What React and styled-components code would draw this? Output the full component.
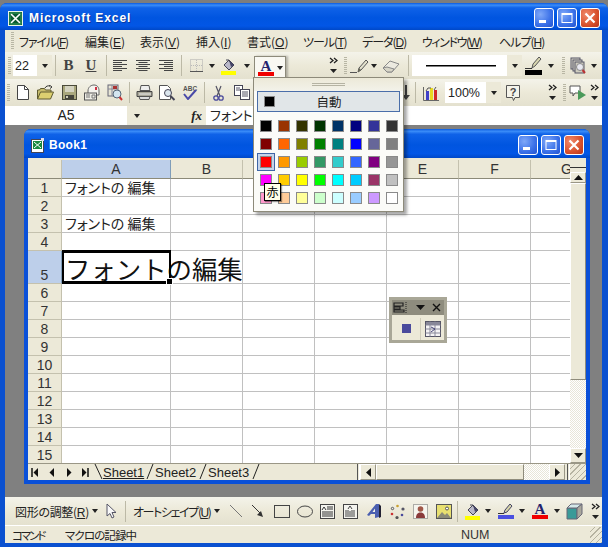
import React from 'react';
import styled, { createGlobalStyle } from 'styled-components';

const Global = createGlobalStyle`
  html, body { margin: 0; padding: 0; background: #7d7d7d; }
  #root { width: 608px; height: 547px; overflow: hidden; }
`;
const JP = `"Noto Sans CJK JP", "Liberation Sans", sans-serif`;
const Page = styled.div`position: relative; width: 608px; height: 547px; overflow: hidden; background: #7d7d7d; padding-top: 3px; box-sizing: border-box; font-family: ${JP}; font-feature-settings: "palt"; color: #222;`;
const Frame = styled.div`display: flex; flex-direction: column; height: 544px; background: #0a50d0; border-radius: 7px 7px 0 0; overflow: hidden;`;
const titleGrad = `linear-gradient(180deg,#0a5ae0 0%,#3a8cf8 8%,#0f62e8 18%,#0055e0 55%,#0256e6 85%,#0048c8 100%)`;
const TitleBar = styled.div`height: 27px; flex: none; display: flex; align-items: center; padding: 3px 8px 0 8px; background: ${titleGrad}; box-sizing: border-box;`;
const TitleText = styled.div`flex: 1; margin-left: 6px; color: #fff; font: bold 12px "Liberation Sans", sans-serif; letter-spacing: .9px; text-shadow: 1px 1px 0 #0a3aa0;`;
const WinBtns = styled.div`display: flex; gap: 3px;`;
const WinBtn = styled.div`width: 20px; height: 20px; box-sizing: border-box; border: 1px solid #fff; border-radius: 3px; display: flex; align-items: center; justify-content: center;
  background: ${p => p.$close ? 'radial-gradient(circle at 30% 30%,#f08a6c,#d8502c 60%,#b8341c)' : 'radial-gradient(circle at 30% 30%,#7fa8f8,#3a70e8 60%,#2454d0)'};`;
const Client = styled.div`flex: 1; display: flex; flex-direction: column; margin: 0 6px 0 5px; min-height: 0;`;
const MenuBar = styled.div`height: 22px; flex: none; display: flex; align-items: center; background: #ece9d8; font-size: 12px; box-sizing: border-box;`;
const MenuItem = styled.div`width: ${p => p.$w}px; flex: none; white-space: nowrap; letter-spacing: ${p => p.$ls || 0}px;`;
const Accel = styled.span`text-decoration: underline; font-family: "Liberation Sans", sans-serif;`;
const Toolbar = styled.div`height: ${p => p.$h || 27}px; flex: none; display: flex; align-items: center; background: linear-gradient(180deg,#f4f3ea,#ece9d8 50%,#e4e1cf); box-sizing: border-box;`;
const Grip = styled.div`width: ${p => p.$w || 7}px; height: 18px; flex: none; display: flex; justify-content: center; &::before { content: ""; width: 3px; background: repeating-linear-gradient(180deg,#b8b6a4 0 1px,transparent 1px 2px); }`;
const Sep = styled.div`width: ${p => p.$w || 6}px; height: 21px; flex: none; display: flex; justify-content: center; &::before { content: ""; width: 1px; background: #bcb9a6; }`;
const Tool = styled.div`width: ${p => p.$w}px; height: 22px; flex: none; display: flex; align-items: center; justify-content: center; position: relative;`;
const Gap = styled.div`width: ${p => p.$w}px; flex: none;`;
const Arrow = styled.div`width: 0; height: 0; flex: none; border-left: 3.5px solid transparent; border-right: 3.5px solid transparent; border-top: 4px solid #222;`;
const Combo = styled.div`width: ${p => p.$w}px; height: 21px; flex: none; display: flex; align-items: center; background: #fff; font: 12.5px "Liberation Sans", sans-serif; box-sizing: border-box; padding-left: ${p => p.$pl || 2}px; color: #222;`;
const ComboBtn = styled.div`width: 15px; height: 100%; margin-left: auto; display: flex; align-items: center; justify-content: center; background: #ece9d8;`;
const SerifLetter = styled.div`font: bold 15px "Liberation Serif", serif; color: #444; text-decoration: ${p => p.$u ? 'underline' : 'none'};`;
const ActiveBtn = styled.div`width: 32px; height: 23px; flex: none; align-self: flex-end; display: flex; align-items: center; justify-content: space-around; box-sizing: border-box; padding: 0 2px; background: #f9f8f2; border: 1px solid #8d8a7a; border-bottom: none; box-shadow: 2px 0 2px rgba(0,0,0,.25);`;
const FormulaBar = styled.div`height: 19px; flex: none; display: flex; background: #ece9d8;`;
const NameBox = styled.div`width: 122px; flex: none; background: #fff; text-align: center; font: 14px/19px "Liberation Sans", sans-serif;`;
const NameArrow = styled.div`width: 20px; flex: none; display: flex; align-items: center; justify-content: center;`;
const Fx = styled.div`width: 59px; flex: none; text-align: right; padding-right: 4px; box-sizing: border-box; font: italic bold 13px/19px "Liberation Serif", serif;`;
const FormulaInput = styled.div`flex: 1; background: #fff; font-size: 13px; line-height: 18px; padding-left: 4px; white-space: nowrap; overflow: hidden;`;
const Mdi = styled.div`flex: 1; min-height: 0; background: #808080; box-sizing: border-box; padding: 4px 12px 13px 19px; display: flex;`;
const DocWin = styled.div`flex: 1; display: flex; flex-direction: column; background: #0a50d8; border-radius: 7px 7px 0 0; box-sizing: border-box; padding: 0 4px 4px; overflow: hidden;`;
const DocTitle = styled.div`height: 29px; flex: none; margin: 0 -4px; padding: 3px 6px 0 7px; display: flex; align-items: center; box-sizing: border-box; background: ${titleGrad};`;
const DocName = styled.div`flex: 1; margin-left: 4px; color: #fff; font: bold 12px "Liberation Sans", sans-serif; letter-spacing: .3px;`;
const DocBody = styled.div`flex: 1; min-height: 0; display: flex; flex-direction: column; background: #ece9d8; padding-top: 2px;`;
const SheetRow = styled.div`flex: 1; min-height: 0; display: flex;`;
const Sheet = styled.div`flex: 1; min-width: 0; overflow: hidden; background: #fff;`;
const Row = styled.div`display: flex; height: ${p => p.$h}px;`;
const Head = styled.div`width: ${p => p.$w}px; flex: none; box-sizing: border-box; display: flex; justify-content: center; align-items: ${p => p.$end ? 'flex-end' : 'center'}; font: 14px/16px "Liberation Sans", sans-serif; color: #333;
  background: ${p => p.$sel ? '#bdcfea' : '#ece9d8'}; border-right: 1px solid ${p => p.$sel ? '#7f9db9' : '#c4c1ae'}; border-bottom: 1px solid ${p => p.$dark ? '#8c8a78' : '#c4c1ae'};`;
const Cell = styled.div`width: ${p => p.$w}px; flex: none; box-sizing: border-box; position: relative; white-space: nowrap; border-right: 1px solid #c0c0c0; border-bottom: 1px solid #c0c0c0; padding-left: 3px; font-size: 14px; line-height: 17px; color: #222;`;
const BigText = styled.div`position: absolute; left: 3px; bottom: 0; font-size: 25.4px; line-height: 30px; z-index: 1; font-feature-settings: normal; color: #111;`;
const SelBox = styled.div`position: absolute; inset: -1px -1px -1px 0; border: solid #000; border-width: 3px 2px; z-index: 2; &::after { content: ""; position: absolute; right: -4px; bottom: -4px; width: 5px; height: 5px; background: #000; border: 1px solid #fff; }`;
const VScroll = styled.div`width: 16px; flex: none; display: flex; flex-direction: column; background: repeating-conic-gradient(#fff 0 25%, #e8e6d8 0 50%) 0 0/2px 2px;`;
const ScrollCap = styled.div`height: 12px; flex: none; background: linear-gradient(180deg,#ece9d8 0 7px,#333 7px 8px,#ece9d8 8px);`;
const ScrollBtn = styled.div`width: ${p => p.$w || 16}px; height: ${p => p.$h || 15}px; flex: none; box-sizing: border-box; display: flex; align-items: center; justify-content: center; background: #ece9d8; border-right: 1px solid #9a9786; border-bottom: 1px solid #9a9786; border-top: 1px solid #fff; border-left: 1px solid #fff;`;
const Thumb = styled.div`flex: none; box-sizing: border-box; height: ${p => p.$h ? p.$h + 'px' : 'auto'}; width: ${p => p.$w ? p.$w + 'px' : 'auto'}; background: #ece9d8; border-right: 1px solid #8f8c7c; border-bottom: 1px solid #8f8c7c; border-top: 1px solid #fff; border-left: 1px solid #fff;`;
const Fill = styled.div`flex: 1;`;
const TabRow = styled.div`height: 17px; flex: none; display: flex; align-items: center; background: #ece9d8; border-top: 1px solid #9a9786; box-sizing: border-box;`;
const Nav = styled.div`width: ${p => p.$w}px; flex: none; display: flex; justify-content: center;`;
const TabSlant = styled.svg`width: 9px; height: 16px; flex: none;`;
const TabLabel = styled.div`font: 13px/15px "Liberation Sans", sans-serif; color: #222; width: ${p => p.$w}px; flex: none;`;
const TabName = styled.span`text-decoration: ${p => p.$on ? 'underline' : 'none'};`;
const HSplit = styled.div`width: 3px; height: 100%; flex: none; border-left: 1px solid #555; border-right: 1px solid #fff; box-sizing: border-box;`;
const HTrack = styled.div`display: flex; flex: none; width: 205px; height: 100%; background: repeating-conic-gradient(#fff 0 25%, #e8e6d8 0 50%) 0 0/2px 2px;`;
const Resize = styled.div`flex: 1; height: 100%; background: repeating-linear-gradient(135deg,#ece9d8 0 3px,#b5b2a0 3px 4px);`;
const DrawText = styled.div`font-size: 12px; white-space: nowrap; flex: none; width: ${p => p.$w}px; letter-spacing: ${p => p.$ls || 0}px;`;
const Status = styled.div`height: 18px; flex: none; display: flex; align-items: center; background: #ece9d8; font-size: 11.5px; border-top: 1px solid #fff; box-sizing: border-box; position: relative;`;
const StatusText = styled.div`flex: none; width: ${p => p.$w}px; white-space: nowrap; padding-left: ${p => p.$pl || 0}px; box-sizing: border-box; letter-spacing: ${p => p.$ls || 0}px;`;
const NumText = styled.div`flex: none; width: 26px; font: 12.5px "Liberation Sans", sans-serif; color: #333;`;
const GripCorner = styled.div`margin-left: auto; width: 12px; height: 16px; background: repeating-linear-gradient(135deg,transparent 0 3px,#b5b2a0 3px 4px);`;
const BottomEdge = styled.div`height: 4px; flex: none;`;

const Popup = styled.div`position: absolute; left: 253px; top: 77px; width: 151px; height: 135px; box-sizing: border-box; background: #fbfbf8; border: 1px solid #8d8a7a; box-shadow: 3px 3px 3px rgba(0,0,0,.35); padding: 0 3px; z-index: 10;`;
const Handle = styled.div`height: 13px; display: flex; flex-direction: column; align-items: center; justify-content: center; gap: 1px; &::before, &::after { content: ""; width: 33px; height: 1px; background: #b5b3a3; } background: linear-gradient(180deg,#ece9d8,#f3f2ea);  margin: 0 -3px;`;
const AutoBtn = styled.div`height: 21px; display: flex; align-items: center; box-sizing: border-box; background: #e1e6e8; border: 1px solid #4a6ea9; margin-top: 0; padding-left: 6px; font-size: 12.5px; color: #222;`;
const AutoLabel = styled.div`flex: 1; text-align: center; padding-right: 16px;`;
const Swatch = styled.div`width: ${p => p.$s || 12}px; height: ${p => p.$s || 12}px; box-sizing: border-box; border: 1px solid #8a8a8a; background: ${p => p.$c}; flex: none;`;
const Palette = styled.div`display: grid; grid-template-columns: repeat(8, 18px); grid-auto-rows: 18px; margin-top: 5px;`;
const PalCell = styled.div`display: flex; align-items: center; justify-content: center; box-sizing: border-box; border: 1px solid ${p => p.$on ? '#3f66a6' : 'transparent'}; background: ${p => p.$on ? '#c6d4ea' : 'transparent'};`;
const Tip = styled.div`position: absolute; left: 10px; top: 105px; width: 17px; height: 18px; box-sizing: border-box; background: #ffffe8; border: 1px solid #000; font-size: 12px; line-height: 15px; text-align: center; color: #000; box-shadow: 1px 1px 1px rgba(0,0,0,.4); z-index: 11;`;
const Floating = styled.div`position: absolute; left: 389px; top: 297px; width: 58px; height: 46px; box-sizing: border-box; border: 3px solid #a9a797; background: #ece9d8; z-index: 5;`;
const FloatTitle = styled.div`height: 15px; background: #8e8c7e; display: flex; align-items: center; justify-content: space-between; padding: 0 3px 0 1px;`;
const FloatBody = styled.div`display: flex; align-items: center; height: 25px; padding-top: 2px; box-sizing: border-box;`;
const FloatBtn = styled.div`width: ${p => p.$w}px; flex: none; height: 22px; box-sizing: border-box; display: flex; align-items: center; justify-content: center; border-left: ${p => p.$div ? '1px solid #cfccba' : 'none'};`;
const BlueSquare = styled.div`width: 9px; height: 9px; background: #4a4a9c;`;

const I = ({ w = 16, h = 16, children, vb }) => <svg width={w} height={h} viewBox={vb || `0 0 ${w} ${h}`} style={{ display: 'block', flex: 'none' }}>{children}</svg>;

const XlIcon = ({ s = 15 }) => <I w={s} h={s} vb="0 0 15 15"><rect x=".5" y=".5" width="14" height="14" fill="#0a5a30" stroke="#e8f4e8" /><path d="M3 3l9 9M12 3l-9 9" stroke="#fff" strokeWidth="1.6" /><rect x="2" y="2" width="11" height="11" fill="none" stroke="#3aa060" /></I>;
const BookIcon = () => <I w={14} h={15}><rect x=".5" y="1.5" width="12" height="13" fill="#fff" stroke="#445" /><rect x="2" y="3" width="9" height="8" fill="#1a8a40" /><path d="M3 4l7 6M10 4l-7 6" stroke="#fff" /><rect x="10" y="0" width="3" height="3" fill="#dde" /></I>;
const MinG = () => <I w={12} h={12}><rect x="1" y="8" width="7" height="3" fill="#fff" /></I>;
const MaxG = () => <I w={12} h={12}><rect x="1" y="1.5" width="10" height="9" fill="none" stroke="#fff" strokeWidth="1" /><rect x="1" y="1" width="10" height="2" fill="#fff" /></I>;
const CloseG = () => <I w={12} h={12}><path d="M1.5 1.5l9 9M10.5 1.5l-9 9" stroke="#fff" strokeWidth="2.2" /></I>;
const Lines = ({ a }) => <I w={15} h={13}>{[1, 3, 5, 7, 9, 11].map((y, i) => { const short = i % 2 === 1; const len = short ? 9 : 14; const x = a === 'l' ? 0 : a === 'r' ? 14 - len : (14 - len) / 2; return <rect key={y} x={x} y={y} width={len} height="1" fill="#444" />; })}</I>;
const BorderI = () => <I><rect x="1.5" y="1.5" width="12" height="12" fill="none" stroke="#aaa" strokeDasharray="1 1" /><path d="M7.5 2v11M2 7.5h11" stroke="#bbb" strokeDasharray="1 1" /><path d="M1 13.5h13" stroke="#555" /></I>;
const FillI = ({ w = 18 }) => <I w={w} h={18}><path d="M4 8l5-5 5 5-5 5z" fill="#b9b8c8" stroke="#445" /><path d="M9 3l5 5-3 2" fill="#446" /><path d="M6 3h3l1 2" stroke="#445" fill="none" /><rect x="1" y="14" width="15" height="4" fill="#ffff00" /></I>;
const ColorA = ({ w = 18 }) => <I w={w} h={18}><text x="8" y="12" textAnchor="middle" fontFamily="Liberation Serif" fontWeight="700" fontSize="15" fill="#24246e">A</text><rect x="0" y="13" width="16" height="4" fill="#f00000" /></I>;
const Chev = () => <I w={9} h={17}><path d="M1 1l3 2.5L1 6M5 1l3 2.5L5 6" stroke="#222" fill="none" strokeWidth="1.3" /><path d="M1 12h7l-3.5 4z" fill="#222" /></I>;
const PenI = () => <I w={20} h={18}><path d="M1 15.5h7" stroke="#555" /><path d="M9 15l1-4 7-8 2 2-7 8z" fill="#e2e0cc" stroke="#555" /><path d="M9 15l1-4 2 2z" fill="#665" /></I>;
const Eraser = () => <I w={18} h={16}><path d="M1 10l7-7 9 3-7 8H5z" fill="#eceae0" stroke="#888" /><path d="M1 10l4 4h5l2-3-7-2z" fill="#d8d6c8" stroke="#888" /></I>;
const PenColor = () => <I w={20} h={19}><path d="M8 12l1-4 6-7 2 2-6 7z" fill="#d8d6b0" stroke="#555" /><path d="M1 12.5h7" stroke="#333" /><rect x="1" y="14" width="17" height="5" fill="#000" /></I>;
const StackI = () => <I w={16} h={17}><rect x="1" y="1" width="9" height="11" fill="#d8d6c8" stroke="#556" /><rect x="3" y="3" width="9" height="11" fill="#d8d6c8" stroke="#556" /><rect x="5" y="5" width="9" height="11" fill="#cfcdbf" stroke="#556" /><circle cx="10" cy="10" r="3.5" fill="#e8e8f0" stroke="#888" /><path d="M12.5 13l2.5 3" stroke="#b33" strokeWidth="2" /></I>;
const NewI = () => <I w={12} h={15}><path d="M.5.5h7l4 4v10H.5z" fill="#fff" stroke="#444" /><path d="M7.5.5v4h4" fill="none" stroke="#444" /></I>;
const OpenI = () => <I w={17} h={15}><path d="M.5 14V5h2l1-1.5h4L8.5 5H14v2" fill="#c8bd6c" stroke="#5e5a30" /><path d="M.5 14l3-7h13l-3 7z" fill="#dcd070" stroke="#5e5a30" /><path d="M8 3c1-2 3-2.5 5-2l-1-.5M13 .5L15 2l-2 1.5" fill="none" stroke="#333" /></I>;
const SaveI = () => <I w={15} h={15}><rect x=".5" y=".5" width="14" height="14" fill="#a9a77c" stroke="#4a4a3a" /><rect x="3" y="1" width="9" height="6" fill="#d4d3c0" /><rect x="3" y="10" width="9" height="4" fill="#44443a" /><rect x="4" y="11" width="2" height="2" fill="#cfcdb8" /></I>;
const MailI = () => <I w={17} h={17}><path d="M4 7c0-4 3-6 6-6s5 2 5 6v4H4z" fill="#f4f3ee" stroke="#666" /><rect x=".5" y="9" width="12" height="7" fill="#eeedE5" stroke="#555" /><path d="M2 11h4M2 13h4M8 11h3v3H8z" stroke="#777" fill="none" /><rect x="11" y="3" width="2" height="3" fill="#c34" /></I>;
const WebPrev = () => <I w={16} h={17}><rect x="1" y="1" width="10" height="11" fill="#e7e5d5" stroke="#667" /><path d="M1 5h10M5 1v11" stroke="#889" /><rect x="6" y="2" width="4" height="3" fill="#a33" /><circle cx="10" cy="10" r="4" fill="#d4e6f0" stroke="#567" /><path d="M12.5 13l2.5 3" stroke="#c33" strokeWidth="2" /></I>;
const PrintI = () => <I w={17} h={15}><path d="M5 .5h8l1 5H4z" fill="#eee" stroke="#555" /><path d="M1 6.5h15v5H1z" fill="#a8a698" stroke="#444" /><path d="M3 9h12" stroke="#eee" /><path d="M3 11.5h11l-1 3H4z" fill="#ddd" stroke="#555" /></I>;
const PrevI = () => <I w={17} h={16}><path d="M.5.5h8l3 3v11H.5z" fill="#fff" stroke="#555" /><circle cx="9" cy="8" r="3.5" fill="#dbe6ee" stroke="#445" /><path d="M11.5 11l4 4" stroke="#445" strokeWidth="2" /></I>;
const SpellI = () => <I w={16} h={15}><text x="1" y="6" fontFamily="Liberation Sans" fontSize="6.5" fontWeight="700" fill="#555">ABC</text><path d="M2 9l4 5 8-9" stroke="#4a4aa8" strokeWidth="2" fill="none" /></I>;
const CutI = () => <I w={11} h={16}><path d="M3 1l4 10M8 1L4 11" stroke="#556" strokeWidth="1.2" /><circle cx="3" cy="13" r="2.2" fill="none" stroke="#4a4a9c" strokeWidth="1.3" /><circle cx="8" cy="13" r="2.2" fill="none" stroke="#4a4a9c" strokeWidth="1.3" /></I>;
const CopyI = () => <I w={16} h={15}><rect x=".5" y=".5" width="8" height="10" fill="#fff" stroke="#445" /><rect x="6.5" y="4.5" width="9" height="10" fill="#fff" stroke="#445" /><path d="M8 7h6M8 9h6M8 11h6M2 3h4M2 5h4" stroke="#556" /></I>;
const SortI = () => <I w={8} h={16}><path d="M4 0v11" stroke="#444" strokeWidth="2" /><path d="M0 10h8l-4 5z" fill="#444" /></I>;
const ChartI = () => <I w={16} h={16}><path d="M.5 2v13.5H16" stroke="#666" fill="none" /><rect x="3" y="6" width="3" height="9" fill="#4040c8" /><rect x="7" y="3" width="3" height="12" fill="#e8d820" /><rect x="11" y="5" width="3" height="10" fill="#d02828" /><path d="M3 6l2-3h3M11 5l2-3" stroke="#555" fill="none" /></I>;
const HelpI = () => <I w={14} h={16}><path d="M.5.5h13v12H9l-1.5 3-1-3H.5z" fill="#f4f3ea" stroke="#555" /><text x="7" y="10.5" textAnchor="middle" fontFamily="Liberation Sans" fontWeight="700" fontSize="11" fill="#444">?</text></I>;
const CommentI = () => <I w={18} h={16}><path d="M1 1h10v7H6l-2 3V8H1z" fill="#fff" stroke="#555" /><path d="M9 5l8 5-8 5z" fill="#4a9a5a" /></I>;
const MiniGrid = () => <I w={16} h={16}><rect x=".5" y=".5" width="15" height="15" fill="#f4f3f5" stroke="#556" /><path d="M.5 4h15M.5 8h15M.5 12h15M5 .5v15M10 .5v15" stroke="#889" /><rect x="1" y="1" width="14" height="3" fill="#889" /><path d="M6 6l4 2-4 3" stroke="#447" fill="none" /></I>;
const FloatIco = () => <I w={15} h={11}><path d="M1 1h9v3H1zM1 5h6v2H1zM1 8h10v2H1z" fill="none" stroke="#222" strokeWidth="1.2" /><path d="M13 0v11" stroke="#222" strokeDasharray="1 1" /></I>;
const FloatX = () => <I w={9} h={9}><path d="M1 1l7 7M8 1L1 8" stroke="#111" strokeWidth="1.4" /></I>;
const CursorI = () => <I w={11} h={16}><path d="M1 1v12l3-2.5 2 4.5 2-1-2-4.5h4z" fill="#f8f8f8" stroke="#556" /></I>;
const LineI = () => <I w={14} h={14}><path d="M1 1l12 12" stroke="#777" /></I>;
const ArrowLine = () => <I w={14} h={14}><path d="M1 1l9 9" stroke="#333" /><path d="M6 11l6 2-2-6z" fill="#333" /></I>;
const RectI = () => <I w={16} h={13}><rect x=".5" y=".5" width="15" height="12" fill="none" stroke="#444" /></I>;
const OvalI = () => <I w={16} h={13}><ellipse cx="8" cy="6.5" rx="7.5" ry="5.5" fill="none" stroke="#444" /></I>;
const TextBoxI = () => <I w={15} h={15}><rect x=".5" y=".5" width="14" height="14" fill="#f4f4ee" stroke="#444" /><path d="M7 3h6M7 5h6M2 8h11M2 10h11M2 12h11" stroke="#333" /><path d="M2 6l2-3 2 3" stroke="#333" fill="none" /></I>;
const VTextI = () => <I w={15} h={15}><rect x=".5" y=".5" width="14" height="14" fill="#f4f4ee" stroke="#444" /><path d="M3 6v7M5 6v7M7 7v6M9 6v7M11 6v7" stroke="#444" /><path d="M5 5l2-3 2 3" stroke="#444" fill="none" /></I>;
const WordA = () => <I w={16} h={16}><path d="M1 12l9-11h3v13l-4 1v-4H5l-2 2z" fill="#4a5fb0" /><path d="M13 1l2 2v11l-2 1z" fill="#223" /><path d="M6.5 9H9V5.5z" fill="#f4f3ea" /></I>;
const DiagramI = () => <I w={15} h={15}><circle cx="7.5" cy="2" r="1.3" fill="#c9a030" /><circle cx="13" cy="5" r="1.6" fill="#556" /><circle cx="12" cy="11" r="1.3" fill="#4a4a9c" /><circle cx="7" cy="13.5" r="1.6" fill="#555" /><circle cx="2" cy="10" r="1.3" fill="#c33" /><circle cx="2.5" cy="4.5" r="1.2" fill="#eee" stroke="#555" /></I>;
const ClipI = () => <I w={15} h={15}><rect x=".5" y=".5" width="14" height="14" fill="#f6f5ee" stroke="#666" strokeDasharray="1 1" /><circle cx="7.5" cy="5" r="2.8" fill="#a05848" /><path d="M3 14c0-4 2-5.5 4.5-5.5S12 10 12 14z" fill="#8a3a3a" /></I>;
const PicI = () => <I w={16} h={15}><rect x=".5" y=".5" width="15" height="14" fill="#e8e070" stroke="#555" /><circle cx="11" cy="4.5" r="1.5" fill="#fff" stroke="#555" /><path d="M1 14l5-6 3 3 2-2 4 5z" fill="#8a8a78" /></I>;
const PenBlue = () => <I w={17} h={17}><path d="M6 10l1-3 5-6 2 2-5 6z" fill="#d6d4a8" stroke="#446" /><path d="M0 10.5h6" stroke="#333" /><rect x="0" y="12" width="16" height="4" fill="#4a50e0" /></I>;
const Cube = () => <I w={17} h={17}><path d="M1 5h10v11H1z" fill="#3a9a98" stroke="#667" /><path d="M1 5l4-4h11l-5 4z" fill="#d4e8e8" stroke="#667" /><path d="M11 5l5-4v10l-5 5z" fill="#a9a79c" stroke="#667" /></I>;
const NavFirst = () => <I w={8} h={9}><path d="M1 0v9" stroke="#111" strokeWidth="1.5" /><path d="M7 0v9L2.5 4.5z" fill="#111" /></I>;
const NavPrev = () => <I w={6} h={9}><path d="M5 0v9L.5 4.5z" fill="#111" /></I>;
const NavNext = () => <I w={6} h={9}><path d="M1 0v9l4.5-4.5z" fill="#111" /></I>;
const NavLast = () => <I w={8} h={9}><path d="M7 0v9" stroke="#111" strokeWidth="1.5" /><path d="M1 0v9l4.5-4.5z" fill="#111" /></I>;
const UpTri = () => <I w={9} h={5}><path d="M0 5h9L4.5 0z" fill="#111" /></I>;
const DownTri = () => <I w={9} h={5}><path d="M0 0h9L4.5 5z" fill="#111" /></I>;
const LeftTri = () => <I w={5} h={9}><path d="M5 0v9L0 4.5z" fill="#111" /></I>;
const RightTri = () => <I w={5} h={9}><path d="M0 0v9l5-4.5z" fill="#111" /></I>;

const Slant = ({ back }) => <TabSlant viewBox="0 0 9 16">{back ? <path d="M1 0l7 15" stroke="#222" fill="none" /> : <path d="M1 15L7 0" stroke="#222" fill="none" />}</TabSlant>;

const menus = [['ファイル(', 'F', 66, -1.15], ['編集(', 'E', 55, 0], ['表示(', 'V', 56, 0], ['挿入(', 'I', 51, 0], ['書式(', 'O', 56, 0], ['ツール(', 'T', 59, -1], ['データ(', 'D', 60, -1], ['ウィンドウ(', 'W', 77, -1.4], ['ヘルプ(', 'H', 50, -1]];
const cols = [109, 72, 72, 72, 72, 72, 72];
const colNames = ['A', 'B', 'C', 'D', 'E', 'F', 'G'];
const rows = [
  { n: 1, t: 'フォントの 編集' }, { n: 2 }, { n: 3, t: 'フォントの 編集' }, { n: 4 },
  { n: 5, h: 33, sel: true }, ...[6, 7, 8, 9, 10, 11, 12, 13, 14, 15].map(n => ({ n })),
];
const palette = ['#000000', '#993300', '#333300', '#003300', '#003366', '#000080', '#333399', '#333333', '#800000', '#FF6600', '#808000', '#008000', '#008080', '#0000FF', '#666699', '#808080', '#FF0000', '#FF9900', '#99CC00', '#339966', '#33CCCC', '#3366FF', '#800080', '#969696', '#FF00FF', '#FFCC00', '#FFFF00', '#00FF00', '#00FFFF', '#00CCFF', '#993366', '#C0C0C0', '#FF99CC', '#FFCC99', '#FFFF99', '#CCFFCC', '#CCFFFF', '#99CCFF', '#CC99FF', '#FFFFFF'];

export default function App() {
  return (
    <Page>
      <Global />
      <Frame>
        <TitleBar>
          <XlIcon />
          <TitleText>Microsoft Excel</TitleText>
          <WinBtns>
            <WinBtn><MinG /></WinBtn>
            <WinBtn><MaxG /></WinBtn>
            <WinBtn $close><CloseG /></WinBtn>
          </WinBtns>
        </TitleBar>
        <Client>
          <MenuBar>
            <Grip $w={14} />
            {menus.map(([a, k, w, ls]) => <MenuItem key={k} $w={w} $ls={ls}>{a}<Accel>{k}</Accel>)</MenuItem>)}
          </MenuBar>
          <Toolbar>
            <Grip $w={8} />
            <Combo $w={39}>22<ComboBtn><Arrow /></ComboBtn></Combo>
            <Sep />
            <Tool $w={21}><SerifLetter>B</SerifLetter></Tool>
            <Tool $w={24}><SerifLetter $u>U</SerifLetter></Tool>
            <Sep />
            <Tool $w={22}><Lines a="l" /></Tool>
            <Tool $w={24}><Lines a="c" /></Tool>
            <Tool $w={23}><Lines a="r" /></Tool>
            <Sep $w={7} />
            <Tool $w={23}><BorderI /></Tool>
            <Tool $w={8}><Arrow /></Tool>
            <Tool $w={26}><FillI /></Tool>
            <Tool $w={10}><Arrow /></Tool>
            <Gap $w={2} />
            <ActiveBtn><ColorA /><Arrow /></ActiveBtn>
            <Gap $w={40} />
            <Tool $w={14}><Chev /></Tool>
            <Gap $w={2} />
            <Grip $w={6} />
            <Tool $w={22}><PenI /></Tool>
            <Tool $w={8}><Arrow /></Tool>
            <Tool $w={26}><Eraser /></Tool>
            <Sep $w={8} />
            <Combo $w={110} $pl={14}><svg width="70" height="2" style={{ display: 'block', flex: 'none' }}><rect width="70" height="1.5" fill="#000" /></svg><ComboBtn><Arrow /></ComboBtn></Combo>
            <Tool $w={24}><PenColor /></Tool>
            <Tool $w={10}><Arrow /></Tool>
            <Gap $w={4} />
            <Grip $w={6} />
            <Tool $w={24}><StackI /></Tool>
            <Tool $w={8}><Arrow /></Tool>
          </Toolbar>
          <Toolbar>
            <Grip $w={6} />
            <Tool $w={23}><NewI /></Tool>
            <Tool $w={23}><OpenI /></Tool>
            <Tool $w={24}><SaveI /></Tool>
            <Tool $w={23}><MailI /></Tool>
            <Tool $w={22}><WebPrev /></Tool>
            <Sep />
            <Tool $w={24}><PrintI /></Tool>
            <Tool $w={23}><PrevI /></Tool>
            <Tool $w={22}><SpellI /></Tool>
            <Sep />
            <Tool $w={23}><CutI /></Tool>
            <Tool $w={23}><CopyI /></Tool>
            <Gap $w={147} />
            <Tool $w={12}><SortI /></Tool>
            <Sep $w={7} />
            <Tool $w={24}><ChartI /></Tool>
            <Gap $w={2} />
            <Combo $w={56} $pl={3}>100%<ComboBtn><Arrow /></ComboBtn></Combo>
            <Gap $w={2} />
            <Tool $w={20}><HelpI /></Tool>
            <Gap $w={22} />
            <Tool $w={14}><Chev /></Tool>
            <Gap $w={2} />
            <Grip $w={6} />
            <Tool $w={21}><CommentI /></Tool>
            <Tool $w={13}><Chev /></Tool>
          </Toolbar>
          <FormulaBar>
            <NameBox>A5</NameBox>
            <NameArrow><Arrow /></NameArrow>
            <Fx>fx</Fx>
            <FormulaInput>フォントの編集</FormulaInput>
          </FormulaBar>
          <Mdi>
            <DocWin>
              <DocTitle>
                <BookIcon />
                <DocName>Book1</DocName>
                <WinBtns>
                  <WinBtn><MinG /></WinBtn>
                  <WinBtn><MaxG /></WinBtn>
                  <WinBtn $close><CloseG /></WinBtn>
                </WinBtns>
              </DocTitle>
              <DocBody>
                <SheetRow>
                  <Sheet>
                    <Row $h={19}>
                      <Head $w={34} $dark />
                      {cols.map((w, i) => <Head key={i} $w={w} $sel={i === 0} $dark>{colNames[i]}</Head>)}
                    </Row>
                    {rows.map(r => (
                      <Row key={r.n} $h={r.h || 18}>
                        <Head $w={34} $sel={r.sel} $end={r.sel}>{r.n}</Head>
                        {cols.map((w, i) => (
                          <Cell key={i} $w={w}>
                            {i === 0 && r.t}
                            {i === 0 && r.sel && <><BigText>フォントの編集</BigText><SelBox /></>}
                          </Cell>
                        ))}
                      </Row>
                    ))}
                  </Sheet>
                  <VScroll>
                    <ScrollCap />
                    <ScrollBtn $h={11}><UpTri /></ScrollBtn>
                    <Thumb $h={197} />
                    <Fill />
                    <ScrollBtn><DownTri /></ScrollBtn>
                  </VScroll>
                </SheetRow>
                <TabRow>
                  <Nav $w={14}><NavFirst /></Nav>
                  <Nav $w={20}><NavPrev /></Nav>
                  <Nav $w={14}><NavNext /></Nav>
                  <Nav $w={18}><NavLast /></Nav>
                  <Slant back />
                  <TabLabel $w={43}><TabName $on>Sheet1</TabName></TabLabel>
                  <Slant />
                  <TabLabel $w={44}>Sheet2</TabLabel>
                  <Slant />
                  <TabLabel $w={44}>Sheet3</TabLabel>
                  <Slant />
                  <Gap $w={96} />
                  <HSplit />
                  <HTrack>
                    <ScrollBtn $w={16} $h={16}><LeftTri /></ScrollBtn>
                    <Thumb $w={148} />
                    <Fill />
                    <ScrollBtn $w={16} $h={16}><RightTri /></ScrollBtn>
                  </HTrack>
                  <Gap $w={2} />
                  <HSplit />
                  <Resize />
                </TabRow>
              </DocBody>
            </DocWin>
          </Mdi>
          <Toolbar $h={28}>
            <Gap $w={10} />
            <DrawText $w={76} $ls={-.3}>図形の調整(<Accel>R</Accel>)</DrawText>
            <Tool $w={8}><Arrow /></Tool>
            <Tool $w={24}><CursorI /></Tool>
            <Sep $w={4} />
            <Gap $w={6} />
            <DrawText $w={78} $ls={-1.4}>オートシェイプ(<Accel>U</Accel>)</DrawText>
            <Tool $w={12}><Arrow /></Tool>
            <Tool $w={25}><LineI /></Tool>
            <Tool $w={20}><ArrowLine /></Tool>
            <Tool $w={28}><RectI /></Tool>
            <Tool $w={18}><OvalI /></Tool>
            <Tool $w={27}><TextBoxI /></Tool>
            <Tool $w={19}><VTextI /></Tool>
            <Tool $w={28}><WordA /></Tool>
            <Tool $w={18}><DiagramI /></Tool>
            <Tool $w={29}><ClipI /></Tool>
            <Tool $w={18}><PicI /></Tool>
            <Sep $w={8} />
            <Tool $w={22}><FillI w={17} /></Tool>
            <Tool $w={10}><Arrow /></Tool>
            <Tool $w={26}><PenBlue /></Tool>
            <Tool $w={6}><Arrow /></Tool>
            <Tool $w={30}><ColorA w={17} /></Tool>
            <Tool $w={4}><Arrow /></Tool>
            <Tool $w={30}><Cube /></Tool>
            <Tool $w={13}><Chev /></Tool>
          </Toolbar>
          <Status>
            <StatusText $w={60} $pl={7} $ls={-2}>コマンド</StatusText>
            <StatusText $w={396} $ls={-.9}>マクロの記録中</StatusText>
            <NumText>NUM</NumText>
            <GripCorner />
          </Status>
        </Client>
        <BottomEdge />
      </Frame>
      <Floating>
        <FloatTitle><FloatIco /><DownTri /><FloatX /></FloatTitle>
        <FloatBody>
          <FloatBtn $w={28}><BlueSquare /></FloatBtn>
          <FloatBtn $w={24} $div><MiniGrid /></FloatBtn>
        </FloatBody>
      </Floating>
      <Popup>
        <Handle />
        <AutoBtn><Swatch $c="#000" $s={11} /><AutoLabel>自動</AutoLabel></AutoBtn>
        <Palette>
          {palette.map((c, i) => <PalCell key={i} $on={i === 16}><Swatch $c={c} /></PalCell>)}
        </Palette>
        <Tip>赤</Tip>
      </Popup>
    </Page>
  );
}
